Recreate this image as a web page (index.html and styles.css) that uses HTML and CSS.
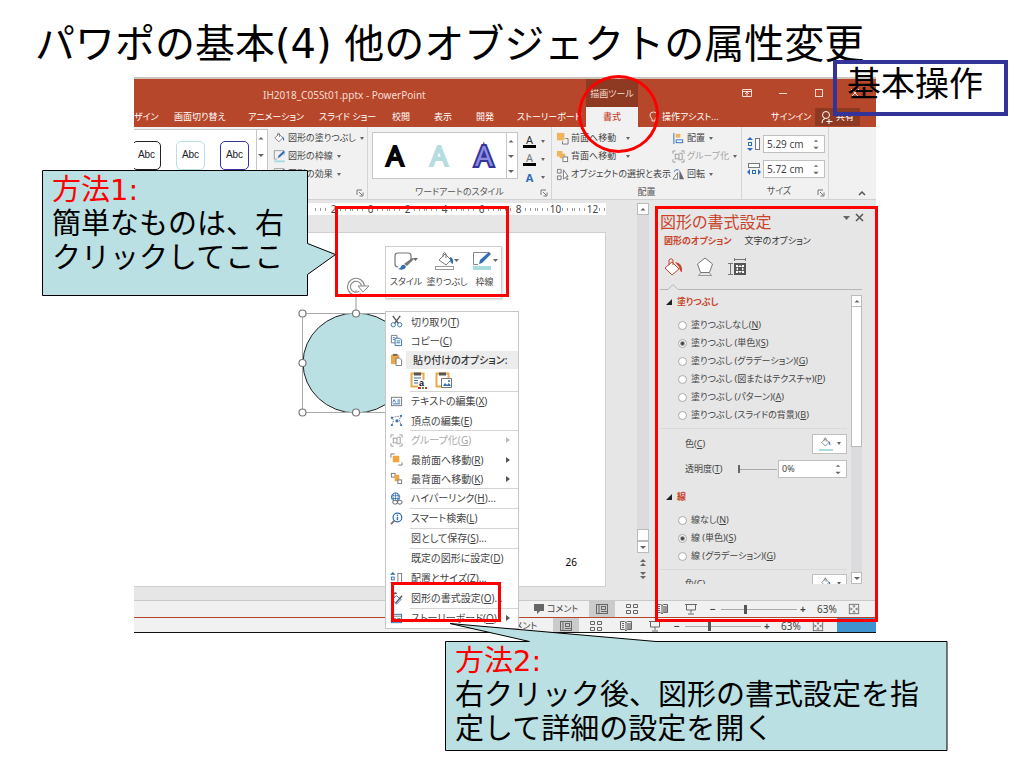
FILE: index.html
```
<!DOCTYPE html>
<html lang="ja">
<head>
<meta charset="utf-8">
<title>パワポの基本(4) 他のオブジェクトの属性変更</title>
<link rel="stylesheet" href="styles.css">
</head>
<body>
<svg class="defs" aria-hidden="true">
  <symbol id="bucket" viewBox="0 0 20 20"><path d="M3 9l6-6 6 6-6 6z" fill="#fff" stroke="#666" stroke-width="1.2"/><path d="M7 6V2.500q1.500-2 3 0V8" fill="none" stroke="#666"/><path d="M14 7q4 1 3 7-2-1-2-5z" fill="#2f6db5"/></symbol>
  <symbol id="pen" viewBox="0 0 20 20"><path d="M17 8V1H2v13h4" fill="none" stroke="#777"/><path d="M7 13l1-4 8-8 3 2-8 8z" fill="#2f6db5" stroke="#fff" stroke-width=".5"/><path d="M2 16h16v3H2z" fill="#a9dcdc"/></symbol>
  <symbol id="front" viewBox="0 0 14 14"><rect x="1" y="1" width="8" height="8" fill="#f0b45c"/><path d="M10 7h3v6H7v-3" fill="none" stroke="#777"/></symbol>
  <symbol id="back" viewBox="0 0 14 14"><path d="M1 1h6v3h3v3H7v2H4V7H1z" fill="#f0b45c"/><rect x="7.500" y="7.500" width="5" height="5" fill="#fff" stroke="#777"/></symbol>
  <symbol id="group" viewBox="0 0 14 14"><path d="M1 4V1h3M10 1h3v3M13 10v3h-3M4 13H1v-3" fill="none" stroke="#999"/><rect x="3.500" y="4.500" width="4" height="5" fill="none" stroke="#999"/><path d="M8 3.500h3v7H7" fill="none" stroke="#999"/></symbol>
  <symbol id="hsize" viewBox="0 0 14 14"><path d="M3 0l3 3H0zM3 14l3-3H0z" fill="#2f6db5"/><rect x="1.500" y="5.500" width="3" height="3" fill="none" stroke="#2f6db5"/><rect x="8.500" y="1.500" width="4" height="11" fill="#fff" stroke="#777"/></symbol>
  <symbol id="wsize" viewBox="0 0 14 14"><rect x="1.500" y="1.500" width="11" height="4" fill="#fff" stroke="#777"/><path d="M0 10l3-3v6zM14 10l-3-3v6z" fill="#2f6db5"/><rect x="5.500" y="8.500" width="3" height="3" fill="none" stroke="#2f6db5"/></symbol>
  <symbol id="launch" viewBox="0 0 8 8"><path d="M1 6V1h5" fill="none" stroke="#777"/><path d="M3 3l3 3M7 3.500V7H3.500" fill="none" stroke="#777"/></symbol>
  <symbol id="normal" viewBox="0 0 14 12"><rect x="1.500" y="1.500" width="11" height="9" fill="none" stroke="#666"/><path d="M4 1v9M6 8.500h6" stroke="#666"/><rect x="6.500" y="3.500" width="4" height="3" fill="none" stroke="#666"/></symbol>
  <symbol id="sorter" viewBox="0 0 14 12"><path d="M1.500 1.500h4v3h-4zM8.500 1.500h4v3h-4zM1.500 7.500h4v3h-4zM8.500 7.500h4v3h-4z" fill="none" stroke="#666"/></symbol>
  <symbol id="book" viewBox="0 0 14 12"><path d="M1.500 1.500h4l1.500 1 1.500-1h4v8h-4L7 11 5.500 9.500h-4zM7 2v9" fill="none" stroke="#666"/><path d="M3 3.500h2M3 5.500h2M3 7.500h2" stroke="#666"/><path d="M8 3h4v6H8z" fill="#999"/></symbol>
  <symbol id="show" viewBox="0 0 14 12"><path d="M1 1.500h12M2.500 2v5h9V2M7 7v3M4 11h6" fill="none" stroke="#666"/></symbol>
  <symbol id="fit" viewBox="0 0 14 14"><rect x="1.500" y="1.500" width="11" height="11" fill="none" stroke="#666"/><path d="M7 2v3M7 9v3M2 7h3M9 7h3" stroke="#666"/><path d="M5.500 3L7 5l1.500-2M5.500 11L7 9l1.500 2M3 5.500L5 7 3 8.500M11 5.500L9 7l2 1.500" fill="none" stroke="#666" stroke-width=".7"/></symbol>
  <symbol id="up" viewBox="0 0 8 8"><path d="M1.500 5.500L4 3l2.500 2.500z" fill="#666"/></symbol>
  <symbol id="down" viewBox="0 0 8 8"><path d="M1 3h6L4 6z" fill="#666"/></symbol>
</svg>

<main class="slide">
  <h1 class="slide-title">パワポの基本(4) 他のオブジェクトの属性変更</h1>

  <section class="window">
    <header class="titlebar">
      <span class="doc-name">IH2018_C05St01.pptx - PowerPoint</span>
      <span class="context-group">描画ツール</span>
      <span class="window-buttons">
        <svg width="12" height="12" viewBox="0 0 12 12"><path d="M1.500 2.500h9v7h-9zM1 4.500h10M6 9V5M4 7l2-2 2 2" fill="none" stroke="#f6ddd5"/></svg>
        <svg width="12" height="12" viewBox="0 0 12 12"><path d="M2 6.500h8" stroke="#f6ddd5"/></svg>
        <svg width="12" height="12" viewBox="0 0 12 12"><rect x="2.500" y="2.500" width="7" height="7" fill="none" stroke="#f6ddd5"/></svg>
        <svg width="12" height="12" viewBox="0 0 12 12"><path d="M2 2l8 8M10 2l-8 8" stroke="#f6ddd5"/></svg>
      </span>
    </header>
    <nav class="tabs">
      <span class="tab">ザイン</span>
      <span class="tab">画面切り替え</span>
      <span class="tab">アニメーション</span>
      <span class="tab">スライド ショー</span>
      <span class="tab">校閲</span>
      <span class="tab">表示</span>
      <span class="tab">開発</span>
      <span class="tab">ストーリーボード</span>
      <span class="tab tab-active">書式</span>
      <span class="tab assist"><svg width="10" height="12" viewBox="0 0 10 12"><path d="M3 8Q1 6 1 4q0-3 3.500-3T8 4q0 2-2 4v2H3z" fill="none" stroke="#f6ddd5"/></svg>操作アシスト...</span>
      <span class="tab">サインイン</span>
      <button class="share"><svg width="12" height="14" viewBox="0 0 12 14"><circle cx="5" cy="5" r="3.500" fill="none" stroke="#fff"/><path d="M1 13q0-4 3-4.500M8 9v5M5.500 11.500h6" fill="none" stroke="#fff"/></svg>共有</button>
    </nav>

    <div class="ribbon">
      <div class="group shape-styles">
        <div class="gallery abc-gallery">
          <button class="abc abc-black">Abc</button><button class="abc abc-teal">Abc</button><button class="abc abc-blue">Abc</button>
        </div>
        <div class="gallery-scroll"><svg><use href="#up"/></svg><svg><use href="#down"/></svg><svg><use href="#down"/></svg></div>
        <div class="commands">
          <button class="cmd"><svg><use href="#bucket"/></svg>図形の塗りつぶし<i class="caret"></i></button>
          <button class="cmd"><svg><use href="#pen"/></svg>図形の枠線<i class="caret"></i></button>
          <button class="cmd"><svg><use href="#pen"/></svg>図形の効果<i class="caret"></i></button>
        </div>
        <svg class="launcher"><use href="#launch"/></svg>
      </div>

      <div class="group wordart">
        <div class="group-main">
          <div class="gallery art-gallery">
            <svg width="32" height="44" viewBox="0 0 32 44"><text class="art art-black" x="16" y="32">A</text></svg>
            <svg width="32" height="44" viewBox="0 0 32 44"><text class="art art-teal" x="16" y="32">A</text></svg>
            <svg width="32" height="44" viewBox="0 0 32 44"><text class="art art-blue" x="16" y="32">A</text></svg>
          </div>
          <div class="gallery-scroll"><svg><use href="#up"/></svg><svg><use href="#down"/></svg><svg><use href="#down"/></svg></div>
          <div class="text-effects">
            <button class="effect"><span class="letter bar">A</span><i class="caret"></i></button>
            <button class="effect"><span class="letter hollow bar">A</span><i class="caret"></i></button>
            <button class="effect"><span class="letter glow">A</span><i class="caret"></i></button>
          </div>
        </div>
        <div class="group-label">ワードアートのスタイル</div>
        <svg class="launcher"><use href="#launch"/></svg>
      </div>

      <div class="group arrange">
        <div class="arrange-grid">
          <button class="cmd"><svg><use href="#front"/></svg>前面へ移動<i class="caret caret-far"></i></button>
          <button class="cmd"><svg viewBox="0 0 14 14"><path d="M2 1v12" stroke="#2f6db5"/><rect x="4" y="2" width="5" height="4" fill="#f0b45c"/><rect x="4.500" y="8.500" width="7" height="3" fill="#fff" stroke="#2f6db5"/></svg>配置<i class="caret"></i></button>
          <button class="cmd"><svg><use href="#back"/></svg>背面へ移動<i class="caret caret-far"></i></button>
          <button class="cmd disabled"><svg><use href="#group"/></svg>グループ化<i class="caret"></i></button>
          <button class="cmd"><svg viewBox="0 0 14 14"><path d="M1.500 1.500h4v4h-4zM1.500 8.500h4v4h-4z" fill="none" stroke="#777"/><path d="M8 2v10l2-2 2 3 1-1-2-3h2z" fill="#fff" stroke="#777"/></svg>オブジェクトの選択と表示</button>
          <button class="cmd"><svg viewBox="0 0 14 14"><path d="M1 12h5V5z" fill="#fff" stroke="#777"/><path d="M8 12V2l5 10z" fill="#667"/><path d="M2 4q2-3 5-2" fill="none" stroke="#2f6db5"/></svg>回転<i class="caret"></i></button>
        </div>
        <div class="group-label">配置</div>
      </div>

      <div class="group size">
        <label class="size-row"><svg><use href="#hsize"/></svg><span class="spin"><input aria-label="高さ" value="5.29 cm"><span class="spin-arrows"><svg><use href="#up"/></svg><svg><use href="#down"/></svg></span></span></label>
        <label class="size-row"><svg><use href="#wsize"/></svg><span class="spin"><input aria-label="幅" value="5.72 cm"><span class="spin-arrows"><svg><use href="#up"/></svg><svg><use href="#down"/></svg></span></span></label>
        <div class="group-label">サイズ</div>
        <svg class="launcher"><use href="#launch"/></svg>
      </div>
      <div class="collapse"><svg width="8" height="8" viewBox="0 0 8 8"><path d="M1 6l3-3 3 3" fill="none" stroke="#555" stroke-width="1.500"/></svg></div>
    </div>

    <div class="work">
      <div class="editor">
        <div class="ruler"><span>2</span><span>0</span><span>2</span><span>4</span><span>6</span><span>8</span><span>10</span><span>12</span></div>
        <div class="page"><span>26</span></div>
      </div>
      <div class="vscroll">
        <span class="sb"><svg><use href="#up"/></svg></span>
        <span class="track"></span>
        <span class="sb"></span>
        <span class="sb"><svg><use href="#down"/></svg></span>
        <svg class="dbl" viewBox="0 0 8 10"><path d="M1 5l3-3 3 3zM1 9l3-3 3 3z" fill="#666"/></svg>
        <svg class="dbl" viewBox="0 0 8 10"><path d="M1 1l3 3 3-3zM1 5l3 3 3-3z" fill="#666"/></svg>
      </div>
      <aside class="pane">
        <div class="pane-head"><h2>図形の書式設定</h2>
          <svg width="24" height="12" viewBox="0 0 24 12"><path d="M2 4h7L5.500 8z" fill="#666"/><path d="M15 2l7 7M22 2l-7 7" stroke="#555" stroke-width="1.500"/></svg>
        </div>
        <div class="pane-tabs"><span class="on">図形のオプション</span><span>文字のオプション</span></div>
        <div class="pane-icons">
          <svg width="20" height="20" viewBox="0 0 20 20"><path d="M2 11l7-6 7 7-7 6z" fill="#fff" stroke="#c8452c"/><path d="M6 8V3q2-3 4 0v5" fill="none" stroke="#c8452c"/><path d="M12 5q8 1 7 10-2 0-3-5z" fill="#c8452c"/></svg>
          <svg width="20" height="20" viewBox="0 0 20 20"><path d="M10 1l7.500 6-3 8.500h-9L2.500 7z" fill="#fff" stroke="#777"/><path d="M3 18.500h14M5.500 16l-2 2.500M14.500 16l2 2.500" stroke="#999"/></svg>
          <svg width="20" height="20" viewBox="0 0 20 20"><path d="M3.500 6v12M1 6.500h5M1 17.500h5M7 2.500h12M7.500 1v3M18.500 1v3" fill="none" stroke="#777"/><rect x="7" y="6" width="12" height="12" fill="#555"/><path d="M9 8h2v2H9zM15 8h2v2h-2zM9 14h2v2H9zM15 14h2v2h-2zM13 8l2 2h-4zM13 16l2-2h-4zM9 12l2-1.500v3zM17 12l-2-1.500v3z" fill="#fff"/></svg>
        </div>
        <div class="notch"><svg width="26" height="7" viewBox="0 0 26 7"><path d="M0 6.500h8l5-5 5 5h8" fill="none" stroke="#b5b5b5"/></svg><span></span></div>
        <div class="pane-body">
          <form class="options">
            <h3>塗りつぶし</h3>
            <label class="radio"><input type="radio" name="fill">塗りつぶしなし(<u>N</u>)</label>
            <label class="radio"><input type="radio" name="fill" checked>塗りつぶし (単色)(<u>S</u>)</label>
            <label class="radio"><input type="radio" name="fill">塗りつぶし (グラデーション)(<u>G</u>)</label>
            <label class="radio"><input type="radio" name="fill">塗りつぶし (図またはテクスチャ)(<u>P</u>)</label>
            <label class="radio"><input type="radio" name="fill">塗りつぶし (パターン)(<u>A</u>)</label>
            <label class="radio"><input type="radio" name="fill">塗りつぶし (スライドの背景)(<u>B</u>)</label>
            <div class="field first"><span>色(<u>C</u>)</span><button type="button" class="color" aria-label="色"><svg><use href="#bucket"/></svg><i class="caret"></i></button></div>
            <div class="field"><label for="alpha">透明度(<u>T</u>)</label><input id="alpha" class="slider" type="range" value="0"><span class="spin"><input aria-label="透明度" value="0%"><span class="spin-arrows"><svg><use href="#up"/></svg><svg><use href="#down"/></svg></span></span></div>
            <h3 class="line-head">線</h3>
            <label class="radio"><input type="radio" name="line">線なし(<u>N</u>)</label>
            <label class="radio"><input type="radio" name="line" checked>線 (単色)(<u>S</u>)</label>
            <label class="radio"><input type="radio" name="line">線 (グラデーション)(<u>G</u>)</label>
            <div class="field last"><span>色(<u>C</u>)</span><button type="button" class="color" aria-label="線の色"><svg><use href="#bucket"/></svg><i class="caret"></i></button></div>
          </form>
          <div class="pane-scroll"><span class="sb"><svg><use href="#up"/></svg></span><span class="thumb"></span><span class="sb"><svg><use href="#down"/></svg></span></div>
        </div>
      </aside>
    </div>

    <footer class="status">
      <span class="comment"><svg width="12" height="12" viewBox="0 0 12 12"><path d="M1 1h10v7H7l-3 3V8H1z" fill="#666"/></svg>コメント</span>
      <span class="view on"><svg><use href="#normal"/></svg></span>
      <span class="view"><svg><use href="#sorter"/></svg></span>
      <span class="view"><svg><use href="#book"/></svg></span>
      <span class="view"><svg><use href="#show"/></svg></span>
      <span class="zoom"><b>−</b><input class="zoom-range" type="range" value="31" aria-label="ズーム"><b>+</b></span>
      <span class="percent">63%</span>
      <svg class="fit"><use href="#fit"/></svg>
    </footer>
    <footer class="status status-behind">
      <span class="comment">コメント</span>
      <span class="view on"><svg><use href="#normal"/></svg></span>
      <span class="view"><svg><use href="#sorter"/></svg></span>
      <span class="view"><svg><use href="#book"/></svg></span>
      <span class="view"><svg><use href="#show"/></svg></span>
      <span class="zoom"><b>−</b><input class="zoom-range" type="range" value="31" aria-label="背面ウィンドウのズーム"><b>+</b></span>
      <span class="percent">63%</span>
      <svg class="fit"><use href="#fit"/></svg>
      <span class="desktop"></span>
    </footer>
  </section>

  <svg class="selected-shape" width="120" height="144" viewBox="0 0 120 144">
    <path d="M59 14v26" stroke="#999"/>
    <ellipse cx="59" cy="87" rx="53" ry="50" fill="#bbe0e3" stroke="#222"/>
    <rect x="5.500" y="37.500" width="107" height="99" fill="none" stroke="#aaa"/>
    <g fill="#fff" stroke="#777" stroke-width="1.200"><circle cx="5.500" cy="37.500" r="3.500"/><circle cx="59" cy="37.500" r="3.500"/><circle cx="5.500" cy="87" r="3.500"/><circle cx="5.500" cy="136.500" r="3.500"/><circle cx="59" cy="136.500" r="3.500"/></g>
    <path d="M63 16.500a7 7 0 1 1 3-6" fill="none" stroke="#888" stroke-width="4"/><path d="M63 16.500a7 7 0 1 1 3-6" fill="none" stroke="#fff" stroke-width="1.800"/>
    <path d="M61 10h11l-6 6z" fill="#fff" stroke="#888"/>
  </svg>

  <div class="mini-toolbar">
    <button><svg width="26" height="20" viewBox="0 0 26 20"><path d="M18 9V5q0-3-3-3H5Q2 2 2 5v8q0 3 3 3" fill="#fff" stroke="#777" stroke-width="1.200"/><path d="M11 13l8-6 2 1-7 7z" fill="#777"/><path d="M5 18q3-1 4-4 3-1 4 2-2 4-8 2z" fill="#2f6db5"/><path d="M20 7h5l-2.500 3z" fill="#666"/></svg><span>スタイル</span></button>
    <button><svg width="26" height="20" viewBox="0 0 26 20"><path d="M5 9l6-6 6 6-5 5z" fill="#fff" stroke="#777"/><path d="M9 6V3q2-3 3 0v4" fill="none" stroke="#777"/><path d="M16 6q4 1 3 7-3-1-3-5z" fill="#2f6db5"/><rect x="1.500" y="15.500" width="18" height="3" fill="#fff" stroke="#999"/><path d="M20 8h5l-2.500 3z" fill="#666"/></svg><span>塗りつぶし</span></button>
    <button><svg width="26" height="20" viewBox="0 0 26 20"><path d="M17 1.500H1.500v12H6" fill="none" stroke="#888"/><path d="M7 13l1-4 9-8 2 2-9 9z" fill="#2f6db5"/><rect x="1" y="15" width="18" height="4" fill="#a9dcdc"/><path d="M21 8h5l-2.500 3z" fill="#666"/></svg><span>枠線</span></button>
  </div>

  <ul class="menu">
    <li><svg viewBox="0 0 14 14"><path d="M3 1l6 8M11 1L5 9" stroke="#555" stroke-width="1.500"/><circle cx="3.500" cy="10.500" r="2.300" fill="none" stroke="#2f6db5"/><circle cx="10.500" cy="10.500" r="2.300" fill="none" stroke="#2f6db5"/></svg><span>切り取り(<u>T</u>)</span></li>
    <li><svg viewBox="0 0 14 14"><path d="M1.500 1.500h6v8h-6z" fill="#fff" stroke="#777"/><path d="M5.500 4.500h5l2 2v6h-7z" fill="#fff" stroke="#2f6db5"/><path d="M7 7.500h4M7 9.500h4M3 4h2M3 6h2" stroke="#2f6db5"/></svg><span>コピー(<u>C</u>)</span></li>
    <li class="heading"><svg viewBox="0 0 14 14"><path d="M1 2h9v10H1z" fill="#e8a94d"/><path d="M3 1h5v2H3z" fill="#666"/><path d="M6.500 5.500h4l2 2v6h-6z" fill="#fff" stroke="#777"/></svg><span>貼り付けのオプション:</span></li>
    <li class="paste">
      <button aria-label="貼り付け先のテーマを使用"><svg width="17" height="18" viewBox="0 0 17 18"><path d="M1.500 2.500h12v13h-12z" fill="#fff" stroke="#e8a94d" stroke-width="2"/><path d="M4 1.500h7v3H4z" fill="#555"/><path d="M4 7h7M4 9.500h4M4 12h4" stroke="#2f6db5"/><path d="M8 9h9v9H8z" fill="#fff"/><text class="paste-letter" x="9" y="15">a</text><path d="M8 17h3" stroke="#c33" stroke-width="2"/><path d="M12 17h2" stroke="#3a4" stroke-width="2"/><path d="M15 17h2" stroke="#c33" stroke-width="2"/></svg></button>
      <button aria-label="図"><svg width="18" height="18" viewBox="0 0 18 18"><path d="M1.500 2.500h12v13h-12z" fill="#fff" stroke="#e8a94d" stroke-width="2"/><path d="M4 1.500h7v3H4z" fill="#555"/><path d="M6.500 7.500h10v9h-10z" fill="#fff" stroke="#777"/><path d="M8 15l2-3 2 2 2-2 2 3z" fill="#2f6db5"/><circle cx="14" cy="10" r="1" fill="#2f6db5"/></svg></button>
    </li>
    <li class="rule"><svg viewBox="0 0 14 14"><rect x="1.500" y="2.500" width="11" height="9" fill="#fff" stroke="#777"/><path d="M3 8l1.500-3L6 8M8 5.500h3M8 7.500h3M3 9.500h8" fill="none" stroke="#2f6db5"/></svg><span>テキストの編集(<u>X</u>)</span></li>
    <li><svg viewBox="0 0 14 14"><path d="M2 12L4 7l-2-3 4-1 6-1-2 4 2 6" fill="none" stroke="#777" stroke-dasharray="2 1"/><path d="M1 3h2v2H1zM11 1h2v2h-2zM1 11h2v2H1zM11 11h2v2h-2zM6 6h3v3H6z" fill="#2f6db5"/></svg><span>頂点の編集(<u>E</u>)</span></li>
    <li class="rule disabled"><svg><use href="#group"/></svg><span>グループ化(<u>G</u>)</span><i class="sub"></i></li>
    <li><svg viewBox="0 0 14 14"><path d="M5 1H1v4M13 10v3H9" fill="none" stroke="#777"/><rect x="3" y="3" width="7" height="7" fill="#f0a63c"/></svg><span>最前面へ移動(<u>R</u>)</span><i class="sub"></i></li>
    <li><svg viewBox="0 0 14 14"><rect x="1.500" y="1.500" width="4" height="4" fill="#fff" stroke="#777"/><rect x="5" y="3" width="5" height="7" fill="#f0a63c"/><rect x="8.500" y="8.500" width="4" height="4" fill="#fff" stroke="#777"/></svg><span>最背面へ移動(<u>K</u>)</span><i class="sub"></i></li>
    <li class="rule"><svg viewBox="0 0 14 14"><circle cx="6" cy="5.500" r="4.500" fill="#fff" stroke="#2f6db5"/><path d="M2 4h8M2 7h8M6 1v9M4 1q-2 4 0 8M8 1q2 4 0 8" fill="none" stroke="#2f6db5" stroke-width=".8"/><rect x="3" y="9" width="5" height="4" rx="2" fill="#fff" stroke="#555"/><rect x="8" y="9" width="5" height="4" rx="2" fill="#fff" stroke="#555"/></svg><span>ハイパーリンク(<u>H</u>)...</span></li>
    <li class="rule"><svg viewBox="0 0 14 14"><circle cx="8" cy="6" r="4.700" fill="#fff" stroke="#2f6db5" stroke-width="1.300"/><path d="M5 9l-4 4" stroke="#777" stroke-width="2"/><path d="M8 3v1.500M8 5.500V9" stroke="#2f6db5" stroke-width="1.500"/></svg><span>スマート検索(<u>L</u>)</span></li>
    <li class="rule"><span>図として保存(<u>S</u>)...</span></li>
    <li class="rule"><span>既定の図形に設定(<u>D</u>)</span></li>
    <li class="tall"><svg><use href="#hsize"/></svg><span>配置とサイズ(<u>Z</u>)...</span></li>
    <li class="tall"><svg viewBox="0 0 14 14"><path d="M2 8l5-4 5 4-5 5z" fill="#fff" stroke="#2f6db5"/><path d="M4 6V2q2-2 3 0M6 12l7-8" fill="none" stroke="#555" stroke-width="1.500"/></svg><span>図形の書式設定(<u>O</u>)...</span></li>
    <li class="rule"><svg viewBox="0 0 14 14"><rect x="1.500" y="2.500" width="11" height="9" fill="#fff" stroke="#2f6db5"/><path d="M1 4.500h12M4 7h2v3H4zM8 7h3v3H8z" fill="none" stroke="#777"/></svg><span>ストーリーボード(<u>O</u>)</span><i class="sub"></i></li>
  </ul>

  <div class="mark mark-toolbar"></div>
  <div class="mark mark-pane"></div>
  <div class="mark mark-menu"></div>
  <div class="mark-tab"></div>
  <div class="topic">基本操作</div>

  <div class="callout callout-one">
    <svg width="296" height="127" viewBox="0 0 296 127"><path d="M.500.500h265v73l28 11-28 20v21H.500z" fill="#bbe0e3" stroke="#000"/></svg>
    <p><strong>方法1:</strong><br>簡単なものは、右クリックしてここ</p>
  </div>
  <div class="callout callout-two">
    <svg width="503" height="129" viewBox="0 0 503 129"><path d="M.500 18.500h84L5 .500l206 18h291v109H.500z" fill="#bbe0e3" stroke="#000"/></svg>
    <p><strong>方法2:</strong><br>右クリック後、図形の書式設定を指定して詳細の設定を開く</p>
  </div>
</main>
</body>
</html>
```

FILE: styles.css
```
* { box-sizing: border-box; }
body { margin: 0; background: #fff; color: #000; font-family: "DejaVu Sans", "Noto Sans CJK JP", sans-serif; }
h1, h2, h3, p, ul { margin: 0; padding: 0; font-weight: 400; }
button { border: 0; padding: 0; margin: 0; background: none; font: inherit; color: inherit; font-feature-settings: inherit; }
input { font: inherit; color: inherit; margin: 0; }
svg { display: block; flex: none; }
.defs { position: absolute; width: 0; height: 0; }

.slide { position: relative; min-height: 100vh; overflow: hidden; }
.slide-title { padding: 14px 0 3px 35px; font-size: 40px; line-height: 60px; white-space: nowrap; }

/* Application window */
.window, .mini-toolbar, .menu {
  font-family: "Noto Sans", "Noto Sans CJK JP", sans-serif;
  font-size: 10px;
  line-height: 14px;
  color: #444;
  white-space: nowrap;
  font-feature-settings: "palt";
}
.window { margin: 0 148px 0 134px; border-top: 2px solid #cfc2bc; border-bottom: 1px solid #111; overflow: hidden; background: #e6e6e6; }

.titlebar { display: grid; grid-template-columns: 452px 52px 1fr; height: 28px; align-items: center; background: #b7472a; color: #f6ddd5; }
.doc-name { padding-left: 129px; padding-top: 3px; }
.context-group { align-self: stretch; padding-top: 8px; text-align: center; background: #8e3a22; font-size: 9px; }
.window-buttons { display: flex; gap: 24px; padding-left: 103px; }

.tabs { display: grid; grid-template-columns: 40px 74px 71px 73px 42px 42px 41px 69px 52px 133px 44px 45px 1fr; height: 20px; align-items: center; background: #b7472a; color: #fff; font-size: 9px; }
.tab { display: flex; align-items: center; }
.tab-active { align-self: stretch; justify-content: center; background: #f1f1f1; color: #c8452c; font-weight: 500; }
.assist { padding-left: 11px; gap: 3px; }
.share { display: flex; align-items: center; justify-content: center; gap: 3px; height: 18px; background: #8e3a22; }

.ribbon { display: grid; grid-template-columns: 234px 184px 190px 87px 1fr; height: 73px; background: #f1f1f1; border-bottom: 1px solid #d0d0d0; }
.group { position: relative; border-right: 1px solid #d5d5d5; }
.group-label { text-align: center; color: #555; font-size: 9px; line-height: 14px; }
.launcher { position: absolute; right: 3px; bottom: 2px; width: 8px; height: 8px; }
.gallery { display: flex; align-items: center; border: 1px solid #c6c6c6; background: #fff; }
.gallery-scroll { display: grid; grid-template-rows: 1fr 1fr 1fr; width: 11px; border: 1px solid #c6c6c6; border-left: 0; background: #fff; }
.gallery-scroll svg { width: 8px; height: 8px; align-self: center; }
.shape-styles { display: grid; grid-template-columns: 123px 11px 1fr; padding-top: 2px; }
.abc-gallery { gap: 15px; border-left: 0; overflow: hidden; }
.abc-gallery, .shape-styles .gallery-scroll { height: 52px; }
.abc { flex: none; width: 29px; height: 29px; border: 1px solid #222; border-radius: 5px; color: #222; font-family: "Liberation Sans", sans-serif; }
.abc-black { margin-left: -2px; }
.abc-teal { border-color: #bbe0e3; }
.abc-blue { border-color: #333399; }
.commands { padding-left: 5px; }
.cmd { display: flex; align-items: center; gap: 2px; height: 18px; white-space: nowrap; font-size: 9px; }
.cmd svg { width: 13px; height: 13px; }
.cmd.disabled { color: #a5a5a5; }
.caret { width: 0; border: 2px solid transparent; border-top: 3px solid #666; border-bottom: 0; margin-left: 2px; }
.caret-far { margin-left: 8px; }
.wordart, .arrange { padding-top: 5px; }
.group-main { display: grid; grid-template-columns: 135px 11px 1fr; height: 50px; padding: 0 0 3px 4px; grid-template-rows: 47px; }
.art-gallery { justify-content: space-around; }
.art { font: 400 28px "Noto Sans", sans-serif; text-anchor: middle; stroke-width: 2; }
.art-black { fill: #000; stroke: #000; }
.art-teal { fill: #bbe0e3; stroke: #b5dcdf; }
.art-blue { fill: #8d8de0; stroke: #333399; stroke-width: 4; paint-order: stroke; }
.text-effects { padding-left: 5px; }
.effect { display: flex; align-items: center; gap: 3px; height: 18px; }
.letter { width: 13px; font-size: 11px; line-height: 11px; text-align: center; color: #333; }
.bar { border-bottom: 3px solid #000; }
.hollow { color: #777; }
.glow { color: #2f6db5; font-weight: 700; }
.wordart .group-label { padding: 3px 0 0; }
.arrange-grid { display: grid; grid-template-columns: 116px 1fr; grid-auto-rows: 18px; padding-left: 4px; height: 50px; margin-top: -3px; margin-bottom: 3px; }
.arrange .group-label { padding-top: 3px; }
.size { display: grid; grid-template-rows: 25px 25px 14px; padding: 4px 3px 0 5px; align-items: center; }
.size-row { display: grid; grid-template-columns: 14px 1fr; gap: 2px; align-items: center; }
.size-row > svg { width: 14px; height: 14px; }
.size .group-label { padding-right: 14px; padding-top: 6px; }
.spin { display: flex; height: 18px; border: 1px solid #c0c0c0; background: #fff; }
.spin input { flex: 1; width: 0; min-width: 0; border: 0; padding: 0 0 0 3px; background: none; }
.spin-arrows { display: grid; width: 12px; align-content: center; }
.spin-arrows svg { width: 8px; height: 7px; }
.collapse { display: flex; align-items: end; justify-content: end; padding: 2px 10px; }

.work { display: grid; grid-template-columns: minmax(0, 1fr) 14px 226px; height: 401px; border-bottom: 1px solid #c9c9c9; }
.ruler { display: grid; grid-template-columns: repeat(8, 37px); margin: 3px 30px 17px 0; padding-left: 181px; height: 12px; overflow: hidden; background: #fff; }
.ruler span { line-height: 12px; text-align: center; background: radial-gradient(ellipse 6px 12px, #fff 95%, transparent), repeating-linear-gradient(90deg, #999 0 1px, transparent 1px 5px) center / 100% 3px no-repeat; }
.page { display: flex; align-items: end; justify-content: end; margin-right: 30px; height: 355px; padding: 0 28px 17px 0; border: 1px solid #cfcfcf; border-left: 0; background: #fff; color: #000; }
.vscroll { display: flex; flex-direction: column; align-items: center; padding-top: 3px; }
.vscroll .track { height: 314px; width: 12px; background: #dcdcde; }
.sb { display: grid; place-items: center; width: 12px; height: 12px; border: 1px solid #bbb; background: #fff; }
.sb svg { width: 8px; height: 8px; }
.dbl { width: 8px; height: 10px; margin-top: 4px; }

.pane { margin-left: 5px; padding: 12px 14px 0 5px; }
.pane-head { display: flex; justify-content: space-between; height: 22px; margin-right: -3px; }
.pane-head h2 { font-size: 16px; line-height: 20px; color: #c8452c; }
.pane-tabs { display: flex; gap: 13px; padding-left: 4px; color: #333; font-size: 9px; line-height: 14px; }
.pane-tabs .on { color: #c8452c; font-weight: 700; }
.pane-icons { display: flex; gap: 12px; padding: 9px 0 6px 3px; }
.notch { display: flex; height: 7px; margin-bottom: 5px; }
.notch span { flex: 1; border-bottom: 1px solid #b5b5b5; }
.pane-body { display: grid; grid-template-columns: 1fr 11px; height: 289px; overflow: hidden; }
.options { overflow: hidden; padding-right: 4px; font-size: 9px; }
.options h3 { display: flex; align-items: center; gap: 5px; height: 20px; padding-left: 6px; margin-top: -3px; margin-bottom: 4px; font-size: 9px; font-weight: 700; color: #c8452c; }
.options h3::before { content: ""; border: 3px solid transparent; border-right-color: #222; border-bottom-color: #222; }
.radio { display: flex; align-items: center; height: 18px; padding-left: 18px; white-space: pre; }
.radio input { appearance: none; width: 9px; height: 9px; margin-right: 4px; border: 1px solid #aaa; border-radius: 50%; background: #fff; }
.radio input:checked { background: radial-gradient(circle, #444 1px, #fff 3px); }
.field { display: grid; grid-template-columns: 1fr 35px; align-items: center; height: 22px; padding-left: 25px; }
.field:has(.slider) { grid-template-columns: 51px 39px 69px; justify-content: space-between; }
.first { margin-top: 4px; height: 30px; border-top: 1px solid #dadada; }
.field.last { margin-top: 4px; height: 28px; border-top: 1px solid #dadada; }
.options .line-head { margin-top: 7px; }
.color { display: flex; align-items: center; justify-content: center; gap: 2px; height: 20px; border: 1px solid #c0c0c0; background: #fff; }
.color svg { width: 14px; height: 14px; border-bottom: 2px solid #a9dcdc; }
.slider, .zoom-range { appearance: none; height: 10px; background: linear-gradient(#aaa, #aaa) center / 100% 1px no-repeat; }
.slider { width: 39px; }
.slider::-webkit-slider-thumb { appearance: none; width: 2px; height: 8px; background: #666; }
.pane-scroll { display: grid; grid-template-rows: 12px 140px 1fr; background: #dcdcde; }
.pane-scroll .sb { width: 11px; }
.pane-scroll .sb:last-child { align-self: end; }
.thumb { border: 1px solid #bbb; border-top: 0; background: #fff; }

.status { display: grid; grid-template-columns: 56px 26px 34px 26px 32px 108px 33px 14px; justify-content: end; align-items: center; height: 17px; padding-right: 14px; background: #f1f1f1; border-bottom: 1px solid #b7472a; }
.comment { display: flex; align-items: center; gap: 2px; font-size: 9px; }
.view { display: grid; place-items: center; height: 16px; }
.view svg { width: 14px; height: 12px; }
.view.on { background: #cbcbcb; }
.zoom { display: grid; grid-template-columns: 8px 76px 8px; gap: 3px; align-items: center; padding-left: 3px; }
.zoom-range { width: 76px; }
.zoom-range::-webkit-slider-thumb { appearance: none; width: 3px; height: 9px; background: #555; }
.percent { padding-left: 2px; }
.fit { width: 12px; height: 12px; }
.status-behind { grid-template-columns: 60px 26px 34px 26px 32px 108px 33px 25px 39px; padding-right: 0; height: 14px; border-bottom: 0; overflow: hidden; }
.status-behind .comment { padding-left: 13px; }
.desktop { align-self: stretch; background: #3f93cf; }

/* Floating canvas items */
.selected-shape { position: absolute; left: 297px; top: 276px; }
.mini-toolbar { position: absolute; left: 385px; top: 246px; display: grid; grid-template-columns: 40px 42px 33px; height: 53px; padding-top: 4px; background: #fff; border: 1px solid #cfcfcf; box-shadow: 1px 1px 2px #ddd; }
.mini-toolbar button { display: flex; flex-direction: column; align-items: center; gap: 4px; font-size: 9px; }
.menu { position: absolute; left: 385px; top: 311px; width: 134px; list-style: none; background: #fff; border: 1px solid #c6c6c6; }
.menu li { display: grid; grid-template-columns: 21px 1fr 12px; align-items: center; height: 19px; padding-left: 4px; }
.menu li.rule, .menu li.tall { height: 20px; }
.menu li.rule { background: linear-gradient(#d5d5d5, #d5d5d5) 24px 0 / 108px 1px no-repeat; }
.menu li > svg { width: 13px; height: 13px; }
.menu li > span { grid-column: 2; }
.menu .heading { font-weight: 500; color: #333; }
.menu .heading span { margin: 0 -12px 0 -5px; padding-left: 7px; line-height: 18px; background: #ececec; }
.menu .paste { display: flex; gap: 8px; height: 22px; padding-left: 24px; }
.paste-letter { font: 700 9px "Liberation Sans", sans-serif; fill: #111; }
.menu .disabled { color: #aaa; }
.sub { grid-column: 3; width: 0; border: 3px solid transparent; border-left: 4px solid #555; border-right: 0; }
.disabled .sub { border-left-color: #bbb; }

/* Annotations */
.mark { position: absolute; border: 3px solid #f00; }
.mark-toolbar { left: 335px; top: 206px; width: 174px; height: 91px; }
.mark-pane { left: 655px; top: 206px; width: 223px; height: 416px; }
.mark-menu { left: 391px; top: 582px; width: 110px; height: 40px; }
.mark-tab { position: absolute; left: 578px; top: 75px; width: 81px; height: 78px; border: 3px solid #f00; border-radius: 50%; }
.topic { position: absolute; left: 833px; top: 60px; width: 175px; height: 56px; padding-left: 10px; border: 4px solid #333399; font-size: 34px; line-height: 40px; white-space: nowrap; }
.callout { position: absolute; font-size: 29px; line-height: 34px; }
.callout svg { position: absolute; left: 0; top: 0; }
.callout p { position: relative; }
.callout strong { color: #f00; font-weight: inherit; }
.callout-one { left: 42px; top: 170px; width: 265px; padding: 3px 10px; }
.callout-two { left: 445px; top: 623px; width: 502px; padding: 21px 10px; }
```
